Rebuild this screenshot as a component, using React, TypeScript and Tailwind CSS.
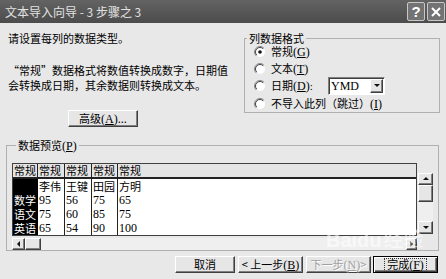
const cjk = "font-['Noto_Sans_CJK_SC',sans-serif]";
const serif = "font-['Liberation_Serif',serif]";
const raised =
  "border border-t-white border-l-white border-r-[#404040] border-b-[#404040] shadow-[inset_-1px_-1px_0_#808080] bg-[#e6e6e6]";
const sunken =
  "border border-t-[#808080] border-l-[#808080] border-r-white border-b-white shadow-[inset_1px_1px_0_#404040]";

function Radio({ checked = false }: { checked?: boolean }) {
  return (
    <svg width="12" height="12" viewBox="0 0 12 12" className="shrink-0">
      <circle cx="6" cy="6" r="5" fill="white" />
      <path d="M9.9 2.1 A5.5 5.5 0 0 0 2.1 9.9" stroke="#8a8a8a" strokeWidth="1" fill="none" />
      <path d="M9.2 2.8 A4.5 4.5 0 0 0 2.8 9.2" stroke="#404040" strokeWidth="1" fill="none" />
      {checked && <circle cx="6" cy="6" r="1.8" fill="#111" />}
    </svg>
  );
}

function Key({ k }: { k: string }) {
  return (
    <span className={`${serif} text-[12px]`}>
      (<span className="underline">{k}</span>)
    </span>
  );
}

function Arrow({ dir }: { dir: "up" | "down" | "left" | "right" }) {
  const pts = {
    up: "1,5 4,2 7,5",
    down: "1,2 4,5 7,2",
    left: "5,1 2,4 5,7",
    right: "2,1 5,4 2,7",
  }[dir];
  return (
    <svg width="8" height="8" viewBox="0 0 8 8">
      <polygon points={pts} fill="#111" />
    </svg>
  );
}

const HEADERS = ["常规", "常规", "常规", "常规", "常规"];
const ROWS = [
  ["", "李伟", "王键", "田园", "方明"],
  ["数学", "95", "56", "75", "65"],
  ["语文", "75", "60", "85", "75"],
  ["英语", "65", "54", "90", "100"],
];

export default function App() {
  return (
    <div className={`relative flex h-[279px] w-[446px] flex-col overflow-hidden bg-[#e8e8e8] text-[11px] text-black ${cjk}`}>
      {/* Title bar */}
      <div className="flex h-[23px] shrink-0 items-center justify-between bg-gradient-to-b from-[#636363] to-[#4c4c4c] pl-[5px] pr-[1px]">
        <span className="text-[12px] leading-none text-[#e2e2e2]">
          文本导入向导 - 3 步骤之 3
        </span>
        <div className="flex gap-[2px]">
          <div className="flex h-[19px] w-[18px] items-center justify-center rounded-[2px] border border-[#c8c8c8] bg-[#737373] font-['Liberation_Sans',sans-serif] text-[15px] font-bold leading-none text-white">
            ?
          </div>
          <div className="flex h-[19px] w-[18px] items-center justify-center rounded-[2px] border border-[#c8c8c8] bg-[#737373]">
            <svg width="12" height="12" viewBox="0 0 12 12">
              <path d="M2 2 L10 10 M10 2 L2 10" stroke="white" strokeWidth="2" />
            </svg>
          </div>
        </div>
      </div>

      {/* Top section */}
      <div className="flex h-[104px] shrink-0">
        <div className="w-[236px] shrink-0 pl-[8px] pt-[8px]">
          <p className="h-[15px] leading-[15px]">请设置每列的数据类型。</p>
          <p className="mt-[17px] whitespace-nowrap leading-[15px]">
            “常规”数据格式将数值转换成数字，日期值
            <br />
            会转换成日期，其余数据则转换成文本。
          </p>
          <button className={`ml-[60px] mt-[17px] flex h-[17px] w-[70px] items-center justify-center leading-none ${raised}`}>
            高级<Key k="A" />...
          </button>
        </div>

        <fieldset className="ml-[8px] mt-[9px] h-[81px] w-[196px] border border-[#b0b0b0] px-[9px]">
          <legend className="-ml-[7px] px-[2px] leading-[12px]">列数据格式</legend>
          <div className="flex flex-col leading-none">
            <label className="flex h-[16px] items-center gap-[5px]">
              <Radio checked />
              <span>常规<Key k="G" /></span>
            </label>
            <label className="flex h-[17px] items-center gap-[5px]">
              <Radio />
              <span>文本<Key k="T" /></span>
            </label>
            <label className="flex h-[18px] items-center gap-[5px]">
              <Radio />
              <span className="w-[52px] whitespace-nowrap">日期<Key k="D" /><span className={serif}>:</span></span>
              <div className={`flex h-[18px] w-[57px] items-center bg-white pl-[2px] ${sunken}`}>
                <span className={`flex-1 text-[12px] leading-none ${serif}`}>YMD</span>
                <div className={`mr-[1px] flex h-[14px] w-[13px] items-center justify-center ${raised}`}>
                  <Arrow dir="down" />
                </div>
              </div>
            </label>
            <label className="flex h-[17px] items-center gap-[5px]">
              <Radio />
              <span className="whitespace-nowrap">不导入此列（跳过）<Key k="I" /></span>
            </label>
          </div>
        </fieldset>
      </div>

      {/* Preview */}
      <fieldset className="ml-[6px] mt-[12px] h-[112px] w-[433px] shrink-0 border border-[#b0b0b0] pl-[5px]">
        <legend className="ml-[4px] px-[2px] leading-[12px]">
          数据预览<Key k="P" />
        </legend>
        <div className="mt-[11px] flex gap-[1px]">
          <div className="flex w-[405px] flex-col">
            <div className="border border-[#404040] bg-white">
              <div className="grid h-[15px] grid-cols-[25px_27px_27px_26px_1fr] border-b-2 border-[#222] bg-[#e4e4e4]">
                {HEADERS.map((h, i) => (
                  <div key={i} className={`overflow-hidden whitespace-nowrap px-[1px] leading-[13px] ${i < 4 ? "border-r border-[#222]" : ""}`}>
                    {h}
                  </div>
                ))}
              </div>
              {ROWS.map((row, r) => (
                <div key={r} className="grid h-[14px] grid-cols-[25px_27px_27px_26px_1fr]">
                  {row.map((c, i) => (
                    <div
                      key={i}
                      className={`overflow-hidden whitespace-nowrap px-[1px] leading-[14px] ${
                        i === 0 ? "bg-black text-white" : i < 4 ? "border-r border-[#222]" : ""
                      } ${/^\d+$/.test(c) ? `${serif} text-[12px]` : ""}`}
                    >
                      {c}
                    </div>
                  ))}
                </div>
              ))}
            </div>
            {/* Horizontal scrollbar */}
            <div className="mt-[2px] flex h-[12px] bg-[#efefef]">
              <div className={`flex w-[13px] items-center justify-center ${raised}`}>
                <Arrow dir="left" />
              </div>
              <div className={`w-[16px] ${raised}`} />
              <div className="flex-1" />
              <div className={`flex w-[11px] items-center justify-center ${raised}`}>
                <Arrow dir="right" />
              </div>
            </div>
          </div>
          {/* Vertical scrollbar */}
          <div className="mt-[10px] flex h-[61px] w-[15px] flex-col bg-[#efefef]">
            <div className={`flex h-[12px] items-center justify-center ${raised}`}>
              <Arrow dir="up" />
            </div>
            <div className={`h-[17px] ${raised}`} />
            <div className="flex-1" />
            <div className={`flex h-[13px] items-center justify-center ${raised}`}>
              <Arrow dir="down" />
            </div>
          </div>
        </div>
      </fieldset>

      {/* Buttons */}
      <div className="mt-[5px] flex h-[17px] shrink-0 justify-end pr-[8px]">
        <button className={`flex w-[60px] items-center justify-center leading-none ${raised}`}>取消</button>
        <button className={`ml-[3px] flex w-[65px] items-center justify-center whitespace-nowrap leading-none ${raised}`}>
          &lt; 上一步<Key k="B" />
        </button>
        <button className={`ml-[3px] flex w-[65px] items-center justify-center whitespace-nowrap leading-none text-[#a0a0a0] [text-shadow:1px_1px_0_white] ${raised}`}>
          下一步<Key k="N" /> &gt;
        </button>
        <button className="ml-[2px] flex w-[65px] items-center justify-center border border-black bg-[#e6e6e6] leading-none shadow-[inset_1px_1px_0_white,inset_-1px_-1px_0_#404040,inset_-2px_-2px_0_#808080]">
          <span className="whitespace-nowrap border border-dotted border-[#333] px-[2px]">
            完成<Key k="F" />
          </span>
        </button>
      </div>

      {/* Watermark */}
      <div className="pointer-events-none absolute left-[326px] top-[229px] font-['Liberation_Sans',sans-serif] text-[20px] font-bold leading-none text-white/60">
        Baidu<span className={`${cjk} ml-[2px] font-normal`}>经验</span>
      </div>
    </div>
  );
}
